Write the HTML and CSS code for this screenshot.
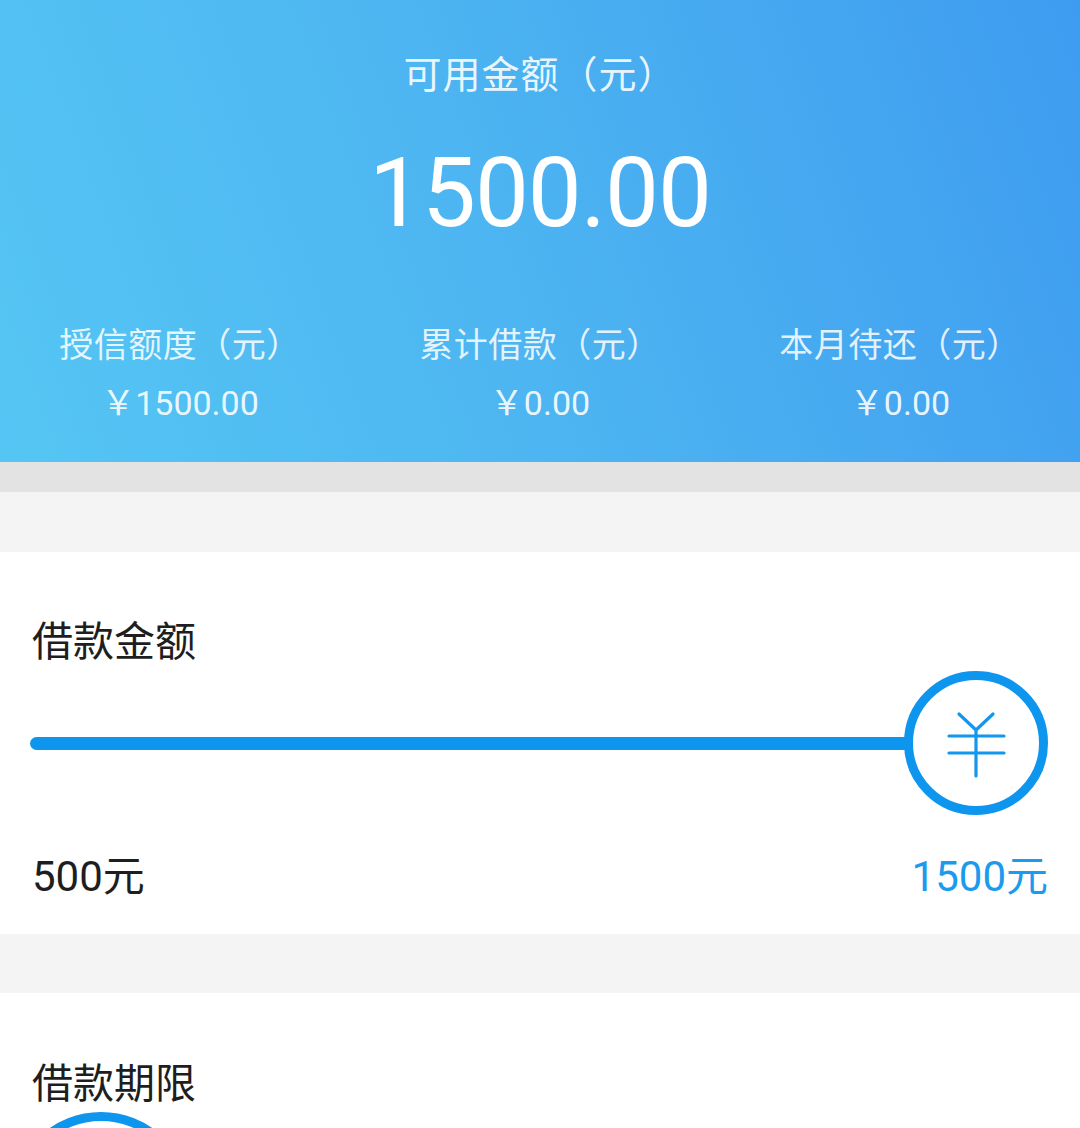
FILE: index.html
```html
<!DOCTYPE html>
<html lang="zh-CN">
<head>
<meta charset="utf-8">
<title>借款</title>
<link rel="stylesheet" href="styles.css">
</head>
<body>
<div class="page">
  <header class="hero">
    <div class="hero-title">可用金额（元）</div>
    <div class="hero-amount">1500.00</div>
    <div class="stats">
      <div class="stat">
        <div class="stat-label">授信额度（元）</div>
        <div class="stat-value">￥1500.00</div>
      </div>
      <div class="stat">
        <div class="stat-label">累计借款（元）</div>
        <div class="stat-value">￥0.00</div>
      </div>
      <div class="stat">
        <div class="stat-label">本月待还（元）</div>
        <div class="stat-value">￥0.00</div>
      </div>
    </div>
  </header>
  <div class="band-dark"></div>
  <div class="band-light"></div>
  <section class="card">
    <div class="card-title">借款金额</div>
    <div class="slider">
      <div class="track"></div>
      <div class="thumb">
        <svg width="72" height="72" viewBox="0 0 72 72" class="yen">
          <path d="M19 7 L36 23 L53 7 M9 29 H64 M9 46 H64 M36 23 V69" fill="none" stroke="#1296ee" stroke-width="3.2" stroke-linecap="round" stroke-linejoin="round"/>
        </svg>
      </div>
    </div>
    <div class="range">
      <span class="range-min">500元</span>
      <span class="range-max">1500元</span>
    </div>
  </section>
  <div class="gap"></div>
  <section class="card card-period">
    <div class="card-title">借款期限</div>
    <div class="periods">
      <div class="period"></div>
    </div>
  </section>
</div>
</body>
</html>
```

FILE: styles.css
```css
html, body {
  margin: 0;
  padding: 0;
  background: #ffffff;
}
body {
  font-family: Roboto, "Noto Sans CJK SC", sans-serif;
  width: 1080px;
  height: 1128px;
  overflow: hidden;
}
.page {
  display: flex;
  flex-direction: column;
}
.hero {
  height: 462px;
  box-sizing: border-box;
  padding-top: 52px;
  background: linear-gradient(70deg, #55c6f4 0%, #4db5f1 45%, #3e9cf0 100%);
  color: #ffffff;
  display: flex;
  flex-direction: column;
  align-items: center;
}
.hero-title {
  font-size: 38px;
  line-height: 46px;
  letter-spacing: 1px;
  color: rgba(255, 255, 255, 0.9);
}
.hero-amount {
  margin-top: 40px;
  font-size: 96px;
  line-height: 110px;
  height: 110px;
  letter-spacing: -1px;
}
.stats {
  margin-top: 73px;
  width: 100%;
  display: grid;
  grid-template-columns: repeat(3, 1fr);
}
.stat {
  display: flex;
  flex-direction: column;
  align-items: center;
}
.stat-label {
  font-size: 34px;
  line-height: 48px;
  letter-spacing: 0.5px;
  color: rgba(255, 255, 255, 0.85);
}
.stat-value {
  margin-top: 5px;
  font-size: 34px;
  line-height: 58px;
  color: rgba(255, 255, 255, 0.9);
}
.band-dark {
  height: 30px;
  background: #e3e3e3;
}
.band-light {
  height: 60px;
  background: #f4f4f4;
}
.gap {
  height: 59px;
  background: #f4f4f4;
}
.card {
  background: #ffffff;
  padding: 62px 32px 29px 32px;
}
.card-title {
  font-size: 41px;
  line-height: 56px;
  color: #1e1e1e;
}
.slider {
  margin-top: 1px;
  height: 144px;
  display: flex;
  align-items: center;
}
.track {
  flex: 1;
  height: 13px;
  margin-left: -2px;
  margin-right: -30px;
  border-radius: 7px;
  background: #0e96ef;
}
.thumb {
  position: relative;
  z-index: 1;
  width: 144px;
  height: 144px;
  box-sizing: border-box;
  border: 9px solid #0e96ef;
  border-radius: 50%;
  background: #ffffff;
  display: flex;
  align-items: center;
  justify-content: center;
}
.yen {
  display: block;
}
.range {
  margin-top: 34px;
  display: flex;
  justify-content: space-between;
  font-size: 42px;
  line-height: 56px;
}
.range-min {
  color: #1e1e1e;
}
.range-max {
  color: #1a9bee;
}
.card-period {
  padding-top: 63px;
  padding-bottom: 0;
}
.periods {
  margin-top: 0;
  display: flex;
}
.period {
  margin-left: -21px;
  width: 180px;
  height: 180px;
  box-sizing: border-box;
  border: 9px solid #0e96ef;
  border-radius: 50%;
}
```
